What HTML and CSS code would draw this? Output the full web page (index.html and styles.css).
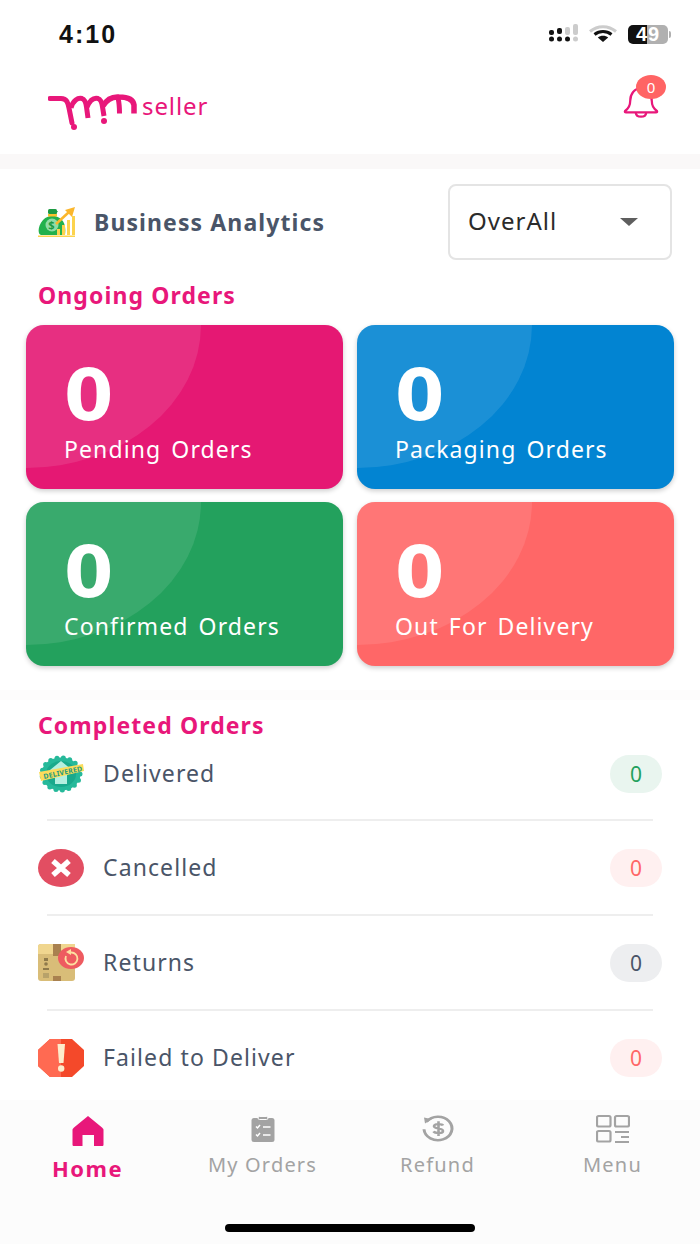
FILE: index.html
```html
<!DOCTYPE html>
<html lang="en">
<head>
    <meta charset="UTF-8">
    <meta name="viewport" content="width=device-width, initial-scale=1.0">
    <title>Seller Home</title>
    <link rel="stylesheet" href="styles.css">
</head>
<body>
    <div class="phone">
        <div class="status-bar">
            <span class="time">4:10</span>
            <div class="status-icons">
                <svg width="29" height="20" viewBox="0 0 29 20">
                    <g fill="#111">
                        <rect x="0" y="6" width="5" height="5" rx="2"/><rect x="8" y="4" width="5" height="6" rx="2"/>
                        <circle cx="2.500" cy="15" r="2.500"/><circle cx="10.500" cy="15" r="2.500"/><circle cx="18.500" cy="15" r="2.500"/>
                    </g>
                    <g fill="#ccc">
                        <rect x="16" y="3" width="5" height="8" rx="2"/><rect x="24" y="0" width="5" height="11" rx="2"/><circle cx="26.500" cy="15" r="2.500"/>
                    </g>
                </svg>
                <svg width="28" height="18" viewBox="0 0 28 18">
                    <path d="M1 6.500C8.500 0 19.500 0 27 6.500" fill="none" stroke="#ccc" stroke-width="3"/>
                    <path d="M5.500 9.500C10.500 5.500 17.500 5.500 22.500 9.500" fill="none" stroke="#111" stroke-width="3"/>
                    <path d="M14 17L8.800 12.500C11.500 10.300 16.500 10.300 19.200 12.500Z" fill="#111"/>
                </svg>
                <div class="battery"><span class="battery-num">49</span></div>
            </div>
        </div>

        <header class="top-bar">
            <div class="logo">
                <svg class="logo-mark" width="92" height="38" viewBox="0 0 92 38">
                    <g fill="none" stroke="#e8177a" stroke-width="5">
                        <path d="M2 4.500H13C19 4.500 20 9 21 14L24 29" stroke-linecap="round"/>
                        <path d="M23 14C25 6 30 3.500 34 4.500C37 5.500 38 9 38.500 13L40 24"/>
                        <path d="M39 13C42 6 46 3.500 50 4.500C53 5.500 54 9 54.500 13L56 22"/>
                        <path d="M55 12C59 5 65 2.500 71 3C78 3 85 4 86 11V19.500" stroke-width="5.500"/>
                        <path d="M70 4C71 8 71.500 12 71.500 19.500" stroke-width="5"/>
                    </g>
                    <circle cx="26" cy="33" r="3" fill="#e8177a"/>
                    <circle cx="56" cy="27" r="3" fill="#e8177a"/>
                </svg>
                <span class="logo-text">seller</span>
            </div>
            <div class="bell">
                <svg width="36" height="31" viewBox="0 0 38 33">
                    <path d="M2 25.500C6 23 7.500 20 7.500 15C7.500 7 12 1.500 19 1.500C26 1.500 30.500 7 30.500 15C30.500 20 32 23 36 25.500C36.500 26.500 36 27 35 27H3C2 27 1.500 26.500 2 25.500Z" fill="none" stroke="#e8177a" stroke-width="2.400"/>
                    <path d="M13.500 27.500C14 33 24 33 24.500 27.500" fill="none" stroke="#e8177a" stroke-width="2.400"/>
                </svg>
                <span class="bell-badge">0</span>
            </div>
        </header>

        <div class="band"></div>

        <main class="content">
            <div class="analytics-row">
                <div class="analytics-title">
                    <svg width="38" height="32" viewBox="0 0 38 32">
                        <path d="M11 5H20L17 10C27 13 28 20 27 29H3C0 29 -1 21 5 14C8 11 11 10 13 10Z" fill="#22b14c"/>
                        <rect x="10" y="3" width="9" height="5" rx="1.500" fill="#1c9a42"/>
                        <rect x="10" y="8" width="9" height="2.500" fill="#fbc02d"/>
                        <circle cx="14" cy="19" r="6.500" fill="#8fdca5"/>
                        <text x="14" y="22.500" class="money-sign">$</text>
                        <path d="M18 18L31 6" stroke="#fbb62c" stroke-width="2.500"/>
                        <path d="M27 4L37 1L34 11Z" fill="#fbb62c"/>
                        <g fill="#fcd34d"><rect x="19" y="23" width="3" height="6"/><rect x="24" y="19" width="3" height="10"/><rect x="29" y="14" width="3" height="15"/><rect x="34" y="10" width="3" height="19"/></g>
                        <rect x="0" y="29.500" width="37" height="1.500" fill="#fcd34d"/>
                    </svg>
                    <span>Business Analytics</span>
                </div>
                <div class="select">
                    <span class="select-value">OverAll</span>
                    <i class="select-caret"></i>
                </div>
            </div>

            <h2 class="section-title">Ongoing Orders</h2>
            <div class="cards">
                <div class="card card-pending"><div class="card-num">0</div><div class="card-label">Pending Orders</div></div>
                <div class="card card-packaging"><div class="card-num">0</div><div class="card-label">Packaging Orders</div></div>
                <div class="card card-confirmed"><div class="card-num">0</div><div class="card-label">Confirmed Orders</div></div>
                <div class="card card-delivery"><div class="card-num">0</div><div class="card-label">Out For Delivery</div></div>
            </div>

            <div class="faint-band"></div>

            <h2 class="section-title section-title-completed">Completed Orders</h2>
            <div class="status-list">
                <div class="status-row">
                    <svg class="row-icon" viewBox="0 0 46 38">
                        <ellipse cx="23" cy="19" rx="19" ry="16" fill="#26b99a" stroke="#26b99a" stroke-width="5" stroke-linecap="round" stroke-dasharray="0 6.500"/>
                        <ellipse cx="23" cy="19" rx="19.500" ry="16.500" fill="#26b99a"/>
                        <ellipse cx="23" cy="19" rx="15" ry="13" fill="#1aa98c"/>
                        <path d="M23 6L34 15H29V29H17V15H12Z" fill="#b5efdf"/>
                        <path d="M1 17L45 9L46 16L3 26Z" fill="#fbdc5b"/>
                        <text x="0" y="0" class="delivered-text" transform="translate(6 24) rotate(-12)">DELIVERED</text>
                    </svg>
                    <span class="row-label">Delivered</span>
                    <span class="pill pill-green">0</span>
                </div>
                <div class="status-row">
                    <svg class="row-icon" viewBox="0 0 46 38">
                        <ellipse cx="23" cy="19" rx="23" ry="19" fill="#e24e62"/>
                        <path d="M15 12L31 26M31 12L15 26" stroke="#fff" stroke-width="5.500"/>
                    </svg>
                    <span class="row-label">Cancelled</span>
                    <span class="pill pill-red">0</span>
                </div>
                <div class="status-row">
                    <svg class="row-icon" viewBox="0 0 46 38">
                        <rect x="0" y="0" width="37" height="37" rx="3" fill="#d9bd78"/>
                        <path d="M0 3C0 1 1 0 3 0H37V10H0Z" fill="#f0d68f"/>
                        <rect x="15" y="0" width="8" height="12" fill="#a9814f"/>
                        <rect x="15" y="32" width="8" height="5" fill="#a9814f"/>
                        <g fill="#8f7a4b"><rect x="6" y="14" width="4" height="3"/><circle cx="8" cy="20" r="1.800"/><rect x="5" y="24" width="6" height="2"/><rect x="5" y="29" width="6" height="5" fill="#b8a26a"/></g>
                        <ellipse cx="33" cy="14" rx="13" ry="11" fill="#ee5b60"/>
                        <path d="M28 12A6 6 0 1 0 33 8.500" fill="none" stroke="#fde0a0" stroke-width="1.800"/>
                        <path d="M33 5L33 11L28 8Z" fill="#fde0a0"/>
                    </svg>
                    <span class="row-label">Returns</span>
                    <span class="pill pill-gray">0</span>
                </div>
                <div class="status-row">
                    <svg class="row-icon" viewBox="0 0 46 38">
                        <path d="M12 0H34L46 11V27L34 38H12L0 27V11Z" fill="#f4492a"/>
                        <path d="M12 0H23V38H12L0 27V11Z" fill="#ff6a52"/>
                        <path d="M19.500 5H27L25.500 24H21Z" fill="#fdeccb"/>
                        <circle cx="23.200" cy="29.500" r="3.200" fill="#fdeccb"/>
                    </svg>
                    <span class="row-label">Failed to Deliver</span>
                    <span class="pill pill-red">0</span>
                </div>
            </div>
        </main>

        <nav class="bottom-nav">
            <div class="nav-items">
                <div class="nav-item nav-item-active">
                    <svg class="nav-icon" width="34" height="32" viewBox="0 0 34 32">
                        <path d="M17 2L31 13.500C32 14.500 32.500 15 32.500 16V30.500C32.500 31.500 32 32 31 32H23V21H11.500V32H3C2 32 1.500 31.500 1.500 30.500V16C1.500 15 2 14.500 3 13.500Z" fill="#e8177a"/>
                    </svg>
                    <span>Home</span>
                </div>
                <div class="nav-item">
                    <svg class="nav-icon" width="34" height="32" viewBox="0 0 34 32">
                        <rect x="5.500" y="4" width="23" height="24" rx="2.500" fill="#a3a3a3"/>
                        <rect x="12" y="2.500" width="10" height="3" rx="1.500" fill="#a3a3a3" stroke="#fcfcfc" stroke-width="1"/>
                        <path d="M10 12.500L11.500 14L14 11M10 20.500L11.500 22L14 19M17 13H24.500M17 21H24.500" fill="none" stroke="#fff" stroke-width="1.500"/>
                    </svg>
                    <span>My Orders</span>
                </div>
                <div class="nav-item">
                    <svg class="nav-icon" width="34" height="32" viewBox="0 0 34 32">
                        <g transform="translate(0 1) scale(1 0.84)">
                            <path d="M5.500 8A14 14 0 1 1 3 17" fill="none" stroke="#a3a3a3" stroke-width="3"/>
                            <path d="M3 3L11 5L4 10Z" fill="#a3a3a3"/>
                            <path d="M22 12.500C21 10.500 13 10 13 13.500C13 17 22 15 22 19C22 22.500 14 22 12.500 19.500M17.500 7.500V25" fill="none" stroke="#a3a3a3" stroke-width="2.600"/>
                        </g>
                    </svg>
                    <span>Refund</span>
                </div>
                <div class="nav-item">
                    <svg class="nav-icon" width="34" height="32" viewBox="0 0 34 32">
                        <g fill="none" stroke="#a3a3a3" stroke-width="2.200">
                            <rect x="1" y="2" width="13.500" height="10.500" rx="1.500"/>
                            <rect x="19" y="2" width="14" height="10.500" rx="1.500"/>
                            <rect x="1" y="17" width="13.500" height="10.500" rx="1.500"/>
                            <path d="M19 18H33M25 23H33M19 28H33"/>
                        </g>
                    </svg>
                    <span>Menu</span>
                </div>
            </div>
            <div class="home-indicator"></div>
        </nav>
    </div>
</body>
</html>
```

FILE: styles.css
```css
* {
    box-sizing: border-box;
}
body {
    margin: 0;
    font-family: "Noto Sans", Arial, sans-serif;
    background-color: #fff;
}
.phone {
    width: 700px;
    height: 1244px;
    display: flex;
    flex-direction: column;
    overflow: hidden;
}

/* status bar */
.status-bar {
    height: 68px;
    flex: none;
    display: flex;
    justify-content: space-between;
    align-items: center;
    padding: 0 28px 0 59px;
}
.time {
    font-family: "Liberation Sans", Arial, sans-serif;
    font-weight: 700;
    font-size: 25px;
    letter-spacing: 2px;
    color: #111;
}
.status-icons {
    display: flex;
    align-items: center;
    gap: 11px;
}
.battery {
    position: relative;
    width: 40px;
    height: 19px;
    margin-right: 4px;
    border-radius: 5px;
    background: linear-gradient(90deg, #111 0, #111 48%, #b0b0b0 48%);
    text-align: center;
}
.battery::after {
    content: "";
    position: absolute;
    top: 6px;
    right: -3px;
    width: 2px;
    height: 7px;
    border-radius: 0 2px 2px 0;
    background-color: #b0b0b0;
}
.battery-num {
    font-family: "Liberation Sans", Arial, sans-serif;
    font-weight: 700;
    font-size: 20px;
    line-height: 19px;
    letter-spacing: 1px;
    color: #fff;
    display: block;
}

/* header */
.top-bar {
    height: 86px;
    flex: none;
    display: flex;
    justify-content: space-between;
    align-items: center;
    padding: 0 41px 0 48px;
}
.logo {
    display: flex;
    align-items: center;
    gap: 2px;
}
.logo-mark {
    margin-top: 4px;
}
.logo-text {
    font-size: 24px;
    letter-spacing: 0.9px;
    color: #e8177a;
    line-height: 24px;
    margin-bottom: 10px;
}
.bell {
    position: relative;
    width: 36px;
    height: 31px;
    margin-bottom: 18px;
}
.bell svg {
    display: block;
}
.bell-badge {
    position: absolute;
    top: -12px;
    left: 13px;
    width: 30px;
    height: 24px;
    border-radius: 50%;
    background-color: #ff6464;
    color: #fff;
    font-size: 15px;
    line-height: 24px;
    text-align: center;
}
.band {
    height: 15px;
    flex: none;
    background-color: #faf8f8;
}

/* main */
.content {
    flex: 1;
    min-height: 0;
    overflow: hidden;
}
.analytics-row {
    display: flex;
    justify-content: space-between;
    align-items: center;
    padding: 15px 28px 15px 38px;
}
.analytics-title {
    display: flex;
    align-items: center;
    gap: 18px;
    font-weight: 700;
    font-size: 23px;
    letter-spacing: 1.100px;
    color: #4a5568;
}
.money-sign {
    font-size: 11px;
    font-weight: 700;
    fill: #1c9a42;
    text-anchor: middle;
}
.select {
    width: 224px;
    height: 76px;
    border: 2px solid #e4e4e4;
    border-radius: 8px;
    display: flex;
    justify-content: space-between;
    align-items: center;
    padding: 0 32px 0 18px;
    font-size: 24px;
    letter-spacing: 1px;
    color: #2b2b2b;
}
.select-value {
    margin-bottom: 3px;
}
.select-caret {
    border-left: 9px solid transparent;
    border-right: 9px solid transparent;
    border-top: 8px solid #5e5e5e;
}
.section-title {
    margin: 0;
    padding-left: 38px;
    padding-top: 5px;
    height: 50px;
    font-size: 23px;
    font-weight: 700;
    letter-spacing: 1.100px;
    line-height: 30px;
    color: #e8177a;
}
.section-title-completed {
    height: 30px;
    padding-top: 0;
    margin-top: 10px;
    margin-bottom: 1px;
}
.cards {
    display: grid;
    grid-template-columns: 317px 317px;
    grid-auto-rows: 164px;
    column-gap: 14px;
    row-gap: 13px;
    padding: 0 26px;
}
.card {
    position: relative;
    overflow: hidden;
    border-radius: 18px;
    padding: 37px 0 0 38px;
    color: #fff;
    box-shadow: 0 2px 5px rgba(0, 0, 0, 0.2);
}
.card::before {
    content: "";
    position: absolute;
    top: -143px;
    left: -175px;
    width: 350px;
    height: 286px;
    border-radius: 50%;
    background-color: rgba(255, 255, 255, 0.1);
}
.card-pending { background-color: #e51873; }
.card-packaging { background-color: #0284d2; }
.card-confirmed { background-color: #23a15d; }
.card-delivery { background-color: #ff6767; }
.card-num {
    font-family: "DejaVu Sans", sans-serif;
    font-weight: 700;
    font-size: 71px;
    line-height: 68px;
}
.card-label {
    font-size: 23px;
    line-height: 30px;
    letter-spacing: 1.100px;
    word-spacing: 3px;
    margin-top: 4px;
}
.faint-band {
    height: 10px;
    margin-top: 24px;
    background-color: #fdfcfc;
}
.status-row {
    height: 95px;
    display: flex;
    align-items: center;
    padding: 0 38px 1px;
    position: relative;
}
.status-row:first-child {
    height: 80px;
    padding-bottom: 15px;
}
.row-icon {
    width: 46px;
    height: 38px;
    flex: none;
}
.row-label {
    flex: 1;
    margin-left: 19px;
    margin-bottom: 2px;
    font-size: 23px;
    letter-spacing: 1.100px;
    color: #4a5568;
}
.delivered-text {
    font-size: 7px;
    font-weight: 700;
    letter-spacing: 0.2px;
    fill: #1b9a80;
}
.pill {
    width: 52px;
    height: 38px;
    border-radius: 19px;
    text-align: center;
    font-size: 21px;
    line-height: 38px;
}
.pill-green { background-color: #e9f5ef; color: #23a15d; }
.pill-red { background-color: #fff0f0; color: #ff6767; }
.pill-gray { background-color: #edeef0; color: #4a5568; }
.status-row:not(:last-child)::after {
    content: "";
    position: absolute;
    left: 47px;
    right: 47px;
    bottom: 0;
    height: 2px;
    background-color: #eeeeee;
}

/* bottom nav */
.bottom-nav {
    height: 144px;
    flex: none;
    background-color: #fcfcfc;
    position: relative;
}
.nav-items {
    display: grid;
    grid-template-columns: repeat(4, 175px);
    padding-top: 14px;
}
.nav-item {
    display: flex;
    flex-direction: column;
    align-items: center;
    gap: 5px;
    font-size: 20px;
    letter-spacing: 1.200px;
    color: #a3a3a3;
}
.nav-item-active {
    color: #e8177a;
    font-weight: 700;
    font-size: 22px;
    letter-spacing: 1.500px;
    gap: 7px;
}
.nav-icon {
    display: block;
}
.home-indicator {
    position: absolute;
    left: 225px;
    bottom: 12px;
    width: 250px;
    height: 8px;
    border-radius: 4px;
    background-color: #000;
}
```
